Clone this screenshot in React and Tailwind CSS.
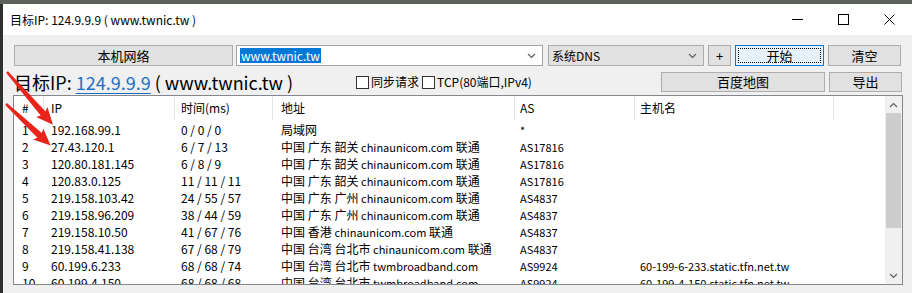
import React from 'react';

const rows = [
  ['1', '192.168.99.1', '0 / 0 / 0', '局域网', '*', ''],
  ['2', '27.43.120.1', '6 / 7 / 13', '中国 广东 韶关 chinaunicom.com 联通', 'AS17816', ''],
  ['3', '120.80.181.145', '6 / 8 / 9', '中国 广东 韶关 chinaunicom.com 联通', 'AS17816', ''],
  ['4', '120.83.0.125', '11 / 11 / 11', '中国 广东 韶关 chinaunicom.com 联通', 'AS17816', ''],
  ['5', '219.158.103.42', '24 / 55 / 57', '中国 广东 广州 chinaunicom.com 联通', 'AS4837', ''],
  ['6', '219.158.96.209', '38 / 44 / 59', '中国 广东 广州 chinaunicom.com 联通', 'AS4837', ''],
  ['7', '219.158.10.50', '41 / 67 / 76', '中国 香港 chinaunicom.com 联通', 'AS4837', ''],
  ['8', '219.158.41.138', '67 / 68 / 79', '中国 台湾 台北市 chinaunicom.com 联通', 'AS4837', ''],
  ['9', '60.199.6.233', '68 / 68 / 74', '中国 台湾 台北市 twmbroadband.com', 'AS9924', '60-199-6-233.static.tfn.net.tw'],
  ['10', '60.199.4.150', '68 / 68 / 68', '中国 台湾 台北市 twmbroadband.com', 'AS9924', '60-199-4-150.static.tfn.net.tw'],
];

// column widths + text offset
const cols = [
  { w: 'w-[30px]', pad: 'pl-[8px]' },
  { w: 'w-[131px]', pad: 'pl-[7px]' },
  { w: 'w-[98px]', pad: 'pl-[6px]' },
  { w: 'w-[242px]', pad: 'pl-[8px]' },
  { w: 'w-[120px]', pad: 'pl-[5px]' },
  { w: 'w-[199px]', pad: 'pl-[5px]' },
];

const headers = ['#', 'IP', '时间(ms)', '地址', 'AS', '主机名'];

// latin runs in address/AS/host columns are drawn a bit narrower, like the original
function Mixed({ text }) {
  const parts = text.split(/([A-Za-z0-9.\-*]+)/);
  return parts.map((p, i) =>
    /^[A-Za-z0-9.\-*]+$/.test(p) ? <span key={i} className="text-[11px]">{p}</span> : <span key={i}>{p}</span>
  );
}

function Chevron({ up }) {
  return (
    <svg width="9" height="6" viewBox="0 0 9 6" fill="none" stroke="#606060" strokeWidth="1.2">
      {up ? <path d="M1 5 L4.5 1.5 L8 5" /> : <path d="M1 1 L4.5 4.5 L8 1" />}
    </svg>
  );
}

function Btn({ className, children }) {
  return (
    <div className={`flex items-center justify-center bg-[#e1e1e1] border border-[#adadad] text-[13px] text-black ${className}`}>
      {children}
    </div>
  );
}

function Arrow({ x, y, angle, len }) {
  return (
    <polygon
      transform={`translate(${x} ${y}) rotate(${angle})`}
      points={`0,-1.2 ${len - 15},-3.2 ${len - 17},-7.5 ${len},0 ${len - 17},7.5 ${len - 15},3.2 0,1.2`}
      fill="#e8241b"
    />
  );
}

export default function App() {
  return (
    <div className="relative w-[912px] h-[293px] overflow-hidden bg-[#2f3432] font-['Noto_Sans_CJK_SC',sans-serif] flex flex-col">
      <div className="h-[4px] bg-[#5d615c]" />
      <div className="flex flex-1">
        <div className="w-[3px] bg-[#2c302f]" />
        <div className="flex-1 flex flex-col">
          {/* title bar */}
          <div className="h-[31px] bg-white flex items-center">
            <span className="pl-[7px] text-[12px] text-black">目标IP: 124.9.9.9 ( www.twnic.tw )</span>
            <div className="ml-auto flex h-full">
              <div className="w-[46px] flex items-center justify-center">
                <svg width="11" height="11" viewBox="0 0 11 11"><path d="M0 5.5 H11" stroke="#000" strokeWidth="1" /></svg>
              </div>
              <div className="w-[46px] flex items-center justify-center">
                <svg width="11" height="11" viewBox="0 0 11 11"><rect x="0.5" y="0.5" width="10" height="10" fill="none" stroke="#000" strokeWidth="1" /></svg>
              </div>
              <div className="w-[46px] flex items-center justify-center">
                <svg width="11" height="11" viewBox="0 0 11 11"><path d="M0.5 0.5 L10.5 10.5 M10.5 0.5 L0.5 10.5" stroke="#000" strokeWidth="1" /></svg>
              </div>
            </div>
          </div>

          {/* body */}
          <div className="flex-1 bg-[#f0f0f0] pl-[10px] pt-[10px] flex flex-col">
            <div className="h-[21px] flex pl-[1px]">
              <Btn className="w-[219px]">本机网络</Btn>
              <div className="ml-[3px] w-[307px] bg-white border border-[#a5a5a5] flex items-center pl-[3px] pr-[6px]">
                <span className="bg-[#0078d7] text-white text-[12px] leading-[15px] px-[1px]">www.twnic.tw</span>
                <span className="ml-auto"><Chevron /></span>
              </div>
              <div className="ml-[5px] w-[156px] bg-[#e1e1e1] border border-[#adadad] flex items-center pl-[3px] pr-[6px] text-[12px]">
                系统DNS
                <span className="ml-auto"><Chevron /></span>
              </div>
              <Btn className="ml-[4px] w-[23px]">+</Btn>
              <div className="ml-[4px] w-[89px] bg-[#e5f1fb] border border-[#0078d7] p-[2px]">
                <div className="h-full border border-dotted border-black flex items-center justify-center text-[13px]">开始</div>
              </div>
              <Btn className="ml-[4px] w-[73px]">清空</Btn>
            </div>

            <div className="mt-[6px] h-[20px] flex items-center pl-[1px]">
              <div className="w-[342px] text-[18px] leading-[20px] text-black whitespace-nowrap">
                目标IP: <span className="text-[#1f6fc5] underline underline-offset-[3px] decoration-1">124.9.9.9</span> ( www.twnic.tw )
              </div>
              <div className="flex items-center text-[12px]">
                <span className="w-[13px] h-[13px] border border-[#333] bg-white" />
                <span className="ml-[2px]">同步请求</span>
                <span className="ml-[3px] w-[13px] h-[13px] border border-[#333] bg-white" />
                <span className="ml-[2px]">TCP(80端口,IPv4)</span>
              </div>
              <div className="ml-auto flex h-full mr-[10px]">
                <Btn className="w-[164px]">百度地图</Btn>
                <Btn className="ml-[4px] w-[73px]">导出</Btn>
              </div>
            </div>

            {/* list */}
            <div className="mt-[3px] w-[890px] h-[190px] border border-[#828790] bg-white flex overflow-hidden">
              <div className="flex-1 flex flex-col text-[12px] text-black">
                <div className="h-[24px] flex shrink-0">
                  {headers.map((h, i) => (
                    <div key={h} className={`${cols[i].w} ${cols[i].pad} flex items-center border-r border-[#e5e5e5]`}>{h}</div>
                  ))}
                </div>
                <div className="pt-[1px]">
                  {rows.map((r) => (
                    <div key={r[0]} className="h-[17px] flex items-center whitespace-nowrap">
                      {r.map((c, i) => (
                        <div key={i} className={`${cols[i].w} ${cols[i].pad} shrink-0`}>
                          {i >= 3 ? <Mixed text={c} /> : c}
                        </div>
                      ))}
                    </div>
                  ))}
                </div>
              </div>
              <div className="w-[17px] bg-[#f0f0f0] flex flex-col">
                <div className="h-[17px] flex items-center justify-center"><Chevron up /></div>
                <div className="mx-[1px] h-[115px] bg-[#cdcdcd]" />
                <div className="mt-auto h-[17px] flex items-center justify-center"><Chevron /></div>
              </div>
            </div>
          </div>
        </div>
      </div>

      {/* annotation arrows */}
      <svg className="absolute left-0 top-0" width="912" height="293">
        <Arrow x={7} y={72} angle={49} len={70} />
        <Arrow x={6} y={104} angle={43} len={61} />
      </svg>
    </div>
  );
}
